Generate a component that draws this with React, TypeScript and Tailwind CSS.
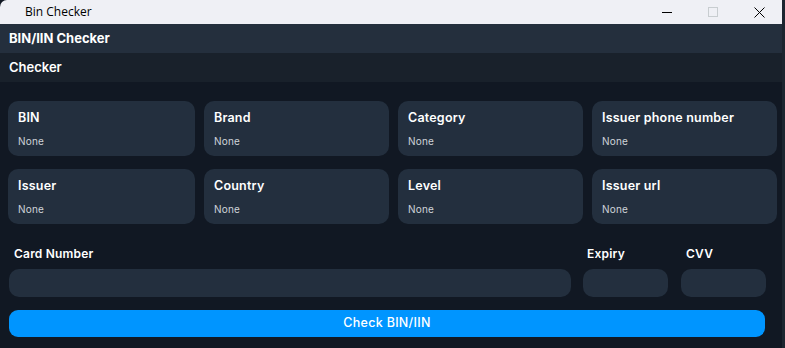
const fields = [
  "BIN",
  "Brand",
  "Category",
  "Issuer phone number",
  "Issuer",
  "Country",
  "Level",
  "Issuer url",
];

function InfoCard({ title, value }: { title: string; value: string }) {
  return (
    <div className="h-[55px] rounded-[10px] bg-[#232f3e] pl-[10px] pt-[9px]">
      <div className="text-[12.5px] font-semibold leading-[16px] tracking-[0.2px] text-white">{title}</div>
      <div className="mt-[9px] text-[10px] leading-[12px] tracking-[0.2px] text-[#cfd3d9]">{value}</div>
    </div>
  );
}

function TitleBar() {
  return (
    <div className="flex h-[24px] items-center rounded-tl-[7px] bg-[#eff0f5] text-black">
      <span className="pl-[25px] text-[12px] font-['Open_Sans',sans-serif]">Bin Checker</span>
      <div className="ml-auto flex h-full">
        <div className="flex w-[46px] items-center justify-center">
          <div className="h-px w-[10px] bg-black" />
        </div>
        <div className="flex w-[46px] items-center justify-center">
          <div className="h-[10px] w-[10px] border border-[#c8cdd0]" />
        </div>
        <div className="flex w-[46px] items-center justify-center">
          <svg width="11" height="11" viewBox="0 0 11 11" fill="none" stroke="black" strokeWidth="1">
            <path d="M0.5 0.5 L10.5 10.5 M10.5 0.5 L0.5 10.5" />
          </svg>
        </div>
      </div>
    </div>
  );
}

export default function App() {
  return (
    <div className="flex h-[348px] w-[785px] bg-[#1c2630] font-['Inter',sans-serif]">
      <div className="flex w-[782px] flex-col bg-[#111823] text-white">
        <TitleBar />
        <div className="flex h-[29px] items-center bg-[#242f3d] px-[9px] text-[13px] font-bold">
          BIN/IIN Checker
        </div>
        <div className="flex h-[29px] items-center bg-[#19212b] px-[9px] text-[13px] font-semibold">
          Checker
        </div>
        <div className="flex flex-col pl-[8px] pr-[6px] pt-[19px]">
          <div className="grid grid-cols-[187px_185px_185px_185px] gap-x-[9px] gap-y-[13px]">
            {fields.map((f) => (
              <InfoCard key={f} title={f} value="None" />
            ))}
          </div>
          <div className="mt-[22px] flex gap-x-[12px] pl-px pr-[10px]">
            <div className="flex flex-1 flex-col">
              <label className="pl-[5px] text-[12px] font-semibold leading-[16px] tracking-[0.2px]">Card Number</label>
              <div className="mt-[7px] h-[28px] rounded-[10px] bg-[#232f3e]" />
            </div>
            <div className="flex w-[85px] flex-col">
              <label className="pl-[4px] text-[12px] font-semibold leading-[16px] tracking-[0.2px]">Expiry</label>
              <div className="mt-[7px] h-[28px] rounded-[10px] bg-[#232f3e]" />
            </div>
            <div className="ml-px flex w-[85px] flex-col">
              <label className="pl-[5px] text-[12px] font-semibold leading-[16px] tracking-[0.2px]">CVV</label>
              <div className="mt-[7px] h-[28px] rounded-[10px] bg-[#232f3e]" />
            </div>
          </div>
          <button className="mt-[13px] mr-[11px] ml-px h-[27px] rounded-[9px] bg-[#0095ff] text-[12.5px] font-medium tracking-[0.3px] text-white">
            Check BIN/IIN
          </button>
        </div>
      </div>
    </div>
  );
}
